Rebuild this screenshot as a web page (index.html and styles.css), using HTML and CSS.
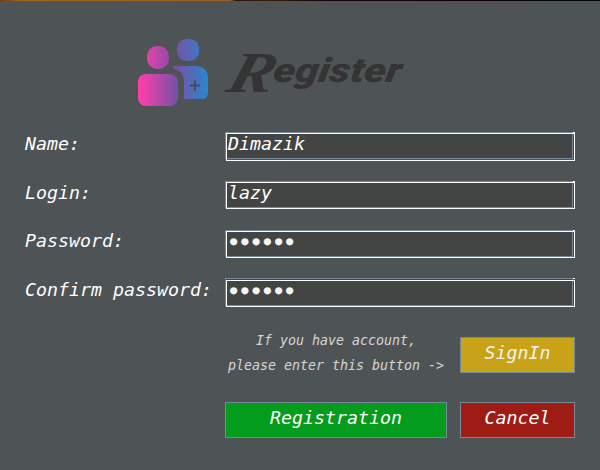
FILE: index.html
```html
<!DOCTYPE html>
<html lang="en">
<head>
<meta charset="utf-8">
<title>Register</title>
<link rel="stylesheet" href="styles.css">
</head>
<body>
<main class="window">
  <header class="header">
    <svg class="logo" width="72" height="68" viewBox="0 0 72 68">
      <defs>
        <linearGradient id="tone" gradientUnits="userSpaceOnUse" x1="2" y1="0" x2="70" y2="0">
          <stop offset="0" stop-color="#ff3ea8"/>
          <stop offset=".55" stop-color="#7751a8"/>
          <stop offset="1" stop-color="#2b86cc"/>
        </linearGradient>
      </defs>
      <g fill="url(#tone)">
        <rect x="10" y="8" width="22" height="23" rx="10"/>
        <rect x="40" y="1" width="22" height="22" rx="9.5"/>
        <rect x="1" y="36" width="40" height="32" rx="8"/>
        <path d="M36 28H59Q71 29 71 40V54Q71 61 65 61H47V42Q46 33 36 30Z"/>
      </g>
      <path d="M53 47.5H63M58 42.5V52.5" stroke="#454b5c" stroke-width="2"/>
    </svg>
    <h1 class="title">
      <svg width="184" height="56" viewBox="0 0 184 56">
        <text class="initial" transform="translate(0 46) skewX(-18)" textLength="46" lengthAdjust="spacingAndGlyphs">R</text>
        <text class="rest" transform="translate(48 36) skewX(-9)" textLength="128" lengthAdjust="spacingAndGlyphs">egister</text>
      </svg>
    </h1>
  </header>
  <section class="form">
    <div class="label">Name:</div><div class="field tall">Dimazik</div>
    <div class="label">Login:</div><div class="field">lazy</div>
    <div class="label raised">Password:</div><div class="field secret">●●●●●●</div>
    <div class="label">Confirm password:</div><div class="field secret gap">●●●●●●</div>
  </section>
  <section class="actions">
    <p class="hint">If you have account,<br>please enter this button -&gt;</p>
    <button class="button signin">SignIn</button>
    <button class="button registration">Registration</button>
    <button class="button cancel">Cancel</button>
  </section>
</main>
</body>
</html>
```
FILE: styles.css
```css
* { box-sizing: border-box; }
body {
  margin: 0;
  background: #4e5355;
  color: #fff;
  font: italic 18.27px/24px "DejaVu Sans Mono", monospace;
}
.window { height: 470px; overflow: hidden; }
.window::before {
  content: "";
  display: block;
  height: 1px;
  background: linear-gradient(90deg, #70380f 0, #a1671f 20px, #996021 230px, #2a1009 236px, #3b2008 265px, #12060a 320px, #050006 600px);
}
.header { display: flex; height: 131px; padding: 37px 0 0 137px; }
.logo { flex: none; overflow: visible; }
.title { margin: 8px 0 0 15px; line-height: 0; }
.title svg { overflow: visible; }
.title text { fill: #343434; }
.initial { font: italic bold 58px "Liberation Serif", serif; }
.rest { font: italic 900 34px Roboto, sans-serif; }
.form {
  display: grid;
  grid-template-columns: 200px 350px;
  grid-template-rows: 49px 49px 48px 59px;
  padding-left: 25px;
}
.label { white-space: nowrap; }
.raised { margin-top: -1px; }
.field {
  position: relative;
  height: 28px;
  padding-left: 3px;
  background:
    linear-gradient(#fff, #fff) no-repeat 347px 0 / 3px 1px,
    linear-gradient(#434545, #434545) no-repeat 1px 1px / 348px 26px;
}
.field::before, .field::after { content: ""; position: absolute; }
.field::before { inset: 0 2px 1px 0; border: 1px solid #778899; }
.field::after { inset: 1px 0 0 1px; border: 1px solid #fff; }
.field.tall { height: 29px; }
.field.tall::before { bottom: 2px; }
.field.gap { height: 29px; }
.field.gap::after { top: 2px; }
.secret { padding-left: 5px; color: #f5f5f5; font-size: 12px; letter-spacing: 4px; line-height: 23px; }
.secret.gap { line-height: 25px; }
.actions {
  display: grid;
  grid-template-columns: 222px 115px;
  grid-template-rows: 36px 36px;
  gap: 29px 13px;
  padding-left: 225px;
}
.hint {
  height: 50px;
  margin: -9px 0 0;
  color: #d6d6d6;
  font-size: 13.3px;
  line-height: 25px;
  text-align: center;
  white-space: nowrap;
}
.button {
  margin: 0;
  padding: 0 0 4px;
  border: 1px solid #778899;
  color: #fff;
  font: inherit;
}
.signin { background: #c9a317; color: #f3f3f3; }
.registration { background: #039c1c; }
.cancel { background: #9e1c13; }
```
